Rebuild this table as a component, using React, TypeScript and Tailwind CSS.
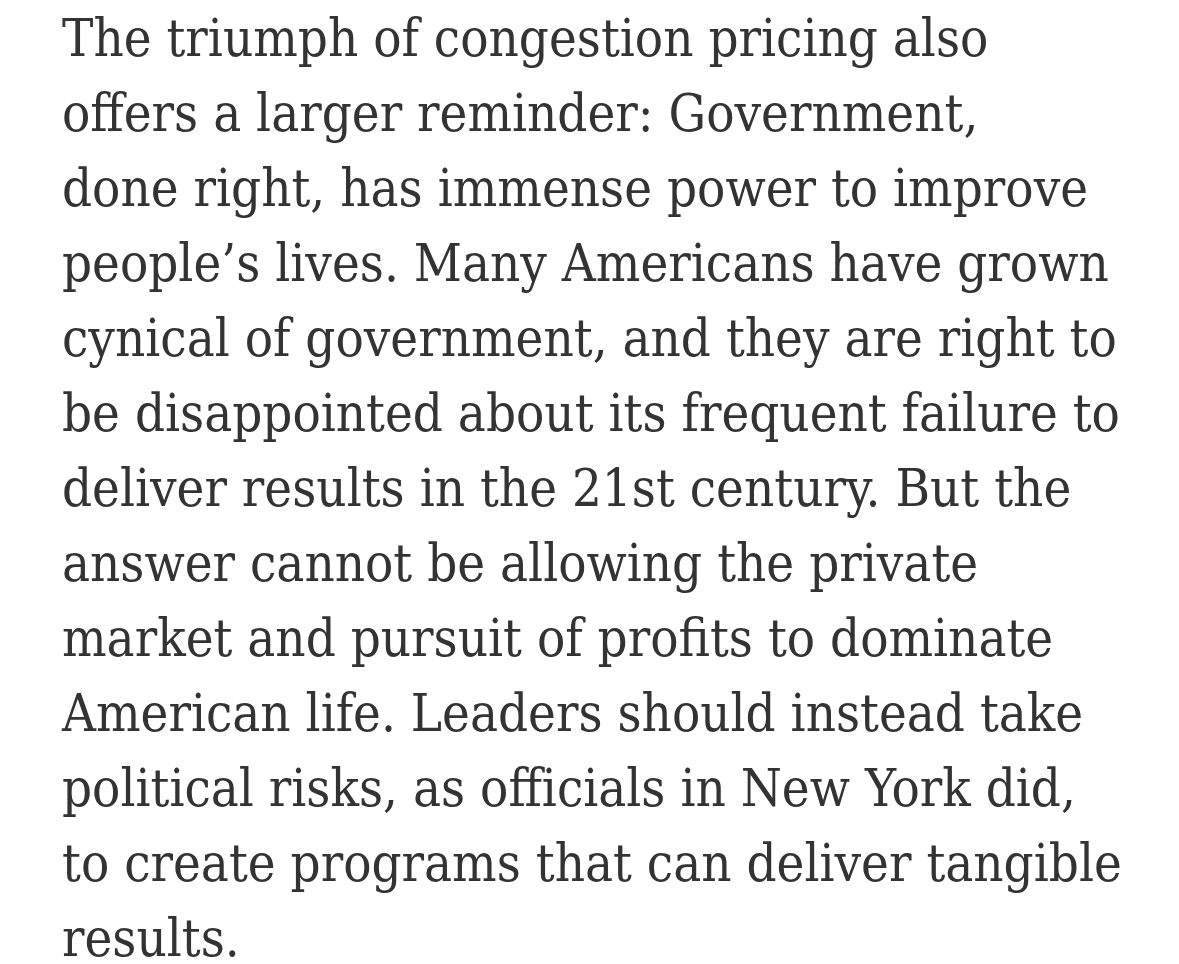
const lines = [
  "The triumph of congestion pricing also",
  "offers a larger reminder: Government,",
  "done right, has immense power to improve",
  "people\u2019s lives. Many Americans have grown",
  "cynical of government, and they are right to",
  "be disappointed about its frequent failure to",
  "deliver results in the 21st century. But the",
  "answer cannot be allowing the private",
  "market and pursuit of profits to dominate",
  "American life. Leaders should instead take",
  "political risks, as officials in New York did,",
  "to create programs that can deliver tangible",
  "results.",
];

export default function App() {
  return (
    <div className="w-[1179px] h-[964px] overflow-hidden bg-white pl-[62px]">
      <div className="font-['DejaVu_Serif_Condensed','DejaVu_Serif',serif] text-[52.3px] leading-[75px] text-[#333333] whitespace-nowrap">
        {lines.map((l, i) => (
          <div key={i}>{l}</div>
        ))}
      </div>
    </div>
  );
}
